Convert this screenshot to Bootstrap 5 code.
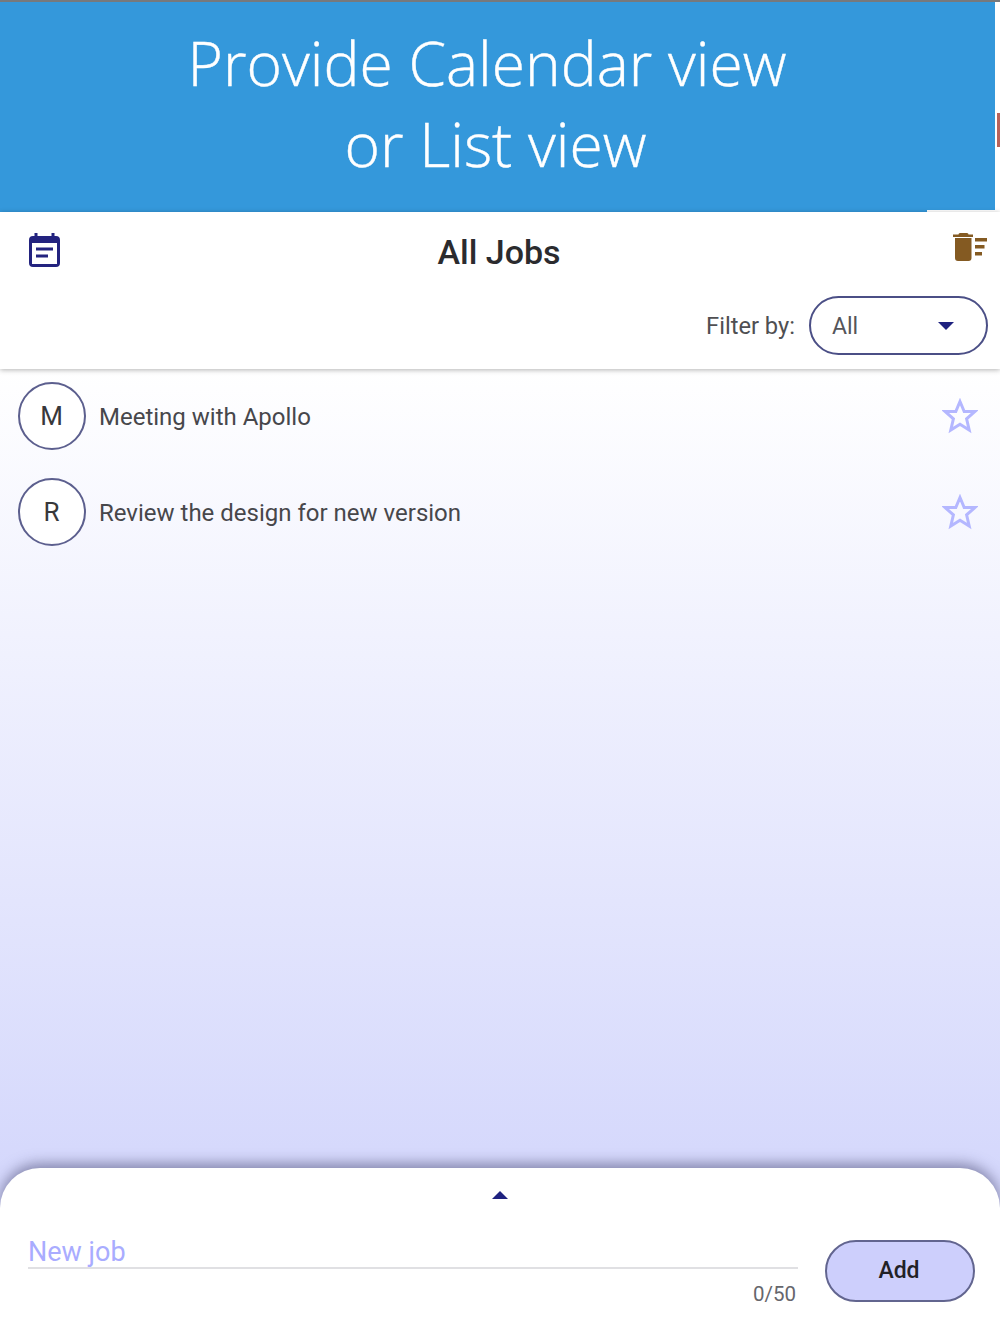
<!DOCTYPE html>
<html lang="en">
<head>
  <meta charset="UTF-8">
  <title>All Jobs</title>
  <link href="https://cdn.jsdelivr.net/npm/bootstrap@5.3.3/dist/css/bootstrap.min.css" rel="stylesheet">
  <style>
    html, body { height: 100%; }
    body {
      margin: 0;
      font-family: Roboto, "Liberation Sans", sans-serif;
      color: #3c3c40;
      background: #fff;
    }
    .app-shell { height: 1334px; overflow: hidden; }
    .promo-wrap { height: 212px; background: #fff; border-top: 2px solid #77797c; }
    .promo-banner {
      width: 995px;
      height: 208px;
      padding-top: 20px;
      background: #3498db;
      color: #fff;
      font-family: "Open Sans", sans-serif;
      font-weight: 300;
      font-size: 60.5px;
      line-height: 81px;
      text-align: center;
      -webkit-text-stroke: 0.4px #fff;
    }
    .promo-banner div:first-child { padding-right: 21px; }
    .promo-banner div:last-child { padding-right: 4px; }
    .promo-foot { width: 927px; height: 2px; background: #3498db; }
    .promo-sliver { width: 3px; height: 34px; margin: 111px 0 0 2px; background: #b9625a; }
    .top-panel {
      height: 157px;
      position: relative;
      z-index: 2;
      background: #fff;
      box-shadow: 0 1px 5px rgba(0,0,0,.3);
    }
    .title-row { height: 84px; padding: 21px 13px 0 29px; }
    .page-title { font-size: 34px; font-weight: 500; color: #2b2b2e; margin: -4px 0 0; line-height: 46px; padding-right: 15px; text-align: center; flex-grow: 1; }
    .filter-row { padding-right: 12px; gap: 14px; }
    .filter-label { font-size: 23.7px; color: #4f4f52; padding-top: 3px; }
    .filter-pill {
      width: 179px;
      height: 59px;
      border: 2px solid #4b4f86;
      border-radius: 30px;
      padding: 0 32px 0 21px;
      font-size: 23px;
      color: #55555a;
    }
    .filter-pill span:first-child { padding-top: 3px; }
    .caret-down { width: 0; height: 0; border-left: 8px solid transparent; border-right: 8px solid transparent; border-top: 8px solid #1f2280; }
    .job-area {
      height: 839px;
      background: linear-gradient(#fff 0, #d5d8fc 799px);
      padding: 13px 22px 0 18px;
    }
    .job-row { height: 68px; margin-bottom: 28px; }
    .job-avatar {
      width: 68px;
      height: 68px;
      flex: none;
      border: 2px solid #5c5f8e;
      border-radius: 50%;
      background: #fff;
      font-size: 26px;
      color: #38383b;
      padding-right: 1px;
    }
    .job-text { margin-left: 13px; padding-top: 2px; font-size: 24px; color: #47474b; }
    .bottom-sheet {
      height: 170px;
      margin-top: -40px;
      position: relative;
      background: #fff;
      border-radius: 40px 40px 0 0;
      box-shadow: 0 -4px 14px rgba(60,60,100,.55);
      padding: 23px 25px 0 28px;
    }
    .caret-wrap { padding-right: 3px; }
    .caret-up { width: 0; height: 0; margin: 0 auto; border-left: 8px solid transparent; border-right: 8px solid transparent; border-bottom: 8px solid #1f2280; }
    .entry-row { margin-top: 20px; gap: 27px; }
    .entry-col { width: 770px; }
    .entry-input {
      display: block;
      width: 100%;
      height: 50px;
      border: 0;
      border-bottom: 2px solid #e0e0e3;
      padding: 18px 0 0;
      outline: 0;
      font-family: Roboto, sans-serif;
      font-size: 27px;
      line-height: 32px;
      background: transparent;
    }
    .entry-input::placeholder { color: #a9acff; opacity: 1; }
    .entry-count { font-size: 20.5px; color: #66666c; text-align: right; padding-top: 12px; padding-right: 2px; line-height: 26px; }
    .add-btn {
      width: 150px;
      height: 62px;
      margin-top: 21px;
      border: 2px solid #62658f;
      border-radius: 31px;
      background: #cdcffc;
      color: #222226;
      font-size: 23px;
      font-weight: 500;
      padding-right: 14px;
    }
    .add-btn:hover { background: #cdcffc; border-color: #62658f; color: #222226; }
  </style>
</head>
<body>
<div class="app-shell">
  <div class="promo-wrap d-flex">
    <div>
      <div class="promo-banner">
        <div>Provide Calendar view</div>
        <div>or List view</div>
      </div>
      <div class="promo-foot"></div>
    </div>
    <div class="promo-sliver"></div>
  </div>

  <div class="top-panel">
    <div class="title-row d-flex align-items-start">
      <svg width="31" height="34" viewBox="0 0 31 34">
        <path fill="#23237f" d="M5.500 0h3v3h14V0h3v3H27a4 4 0 0 1 4 4v23a4 4 0 0 1-4 4H4a4 4 0 0 1-4-4V7a4 4 0 0 1 4-4h1.500z"/>
        <rect fill="#fff" x="3" y="10" width="25" height="21"/>
        <rect fill="#23237f" x="7" y="14.500" width="17" height="3"/>
        <rect fill="#23237f" x="7" y="21.500" width="12" height="3"/>
      </svg>
      <h1 class="page-title">All Jobs</h1>
      <svg width="34" height="28" viewBox="0 0 34 28">
        <path fill="#845a22" d="M7 0h7a1.500 1.500 0 0 1 1.500 1.500H20V4H0V1.500h5.500A1.500 1.500 0 0 1 7 0zM2 5h16.500v20a3 3 0 0 1-3 3H5a3 3 0 0 1-3-3z"/>
        <rect fill="#845a22" x="22" y="5" width="12" height="3.500"/>
        <rect fill="#845a22" x="22" y="12" width="9.500" height="3.500"/>
        <rect fill="#845a22" x="22" y="19" width="7" height="3.500"/>
      </svg>
    </div>
    <div class="filter-row d-flex justify-content-end align-items-center">
      <span class="filter-label">Filter by:</span>
      <div class="filter-pill d-flex justify-content-between align-items-center">
        <span>All</span>
        <span class="caret-down"></span>
      </div>
    </div>
  </div>

  <div class="job-area">
    <div class="job-row d-flex align-items-center">
      <div class="job-avatar d-flex justify-content-center align-items-center">M</div>
      <div class="job-text flex-grow-1">Meeting with Apollo</div>
      <svg width="36" height="36" viewBox="0 0 36 36"><path fill="none" stroke="#b4b7ff" stroke-width="3" d="M18 3.500l4.200 10h10.800l-8.400 7.400 2.600 11.100-9.200-5.800-9.200 5.800 2.600-11.100L3 13.500h10.800z"/></svg>
    </div>
    <div class="job-row d-flex align-items-center">
      <div class="job-avatar d-flex justify-content-center align-items-center">R</div>
      <div class="job-text flex-grow-1">Review the design for new version</div>
      <svg width="36" height="36" viewBox="0 0 36 36"><path fill="none" stroke="#b4b7ff" stroke-width="3" d="M18 3.500l4.200 10h10.800l-8.400 7.400 2.600 11.100-9.200-5.800-9.200 5.800 2.600-11.100L3 13.500h10.800z"/></svg>
    </div>
  </div>

  <div class="bottom-sheet">
    <div class="caret-wrap"><div class="caret-up"></div></div>
    <div class="entry-row d-flex align-items-start">
      <div class="entry-col">
        <input class="entry-input" type="text" placeholder="New job">
        <div class="entry-count">0/50</div>
      </div>
      <button class="btn add-btn" type="button">Add</button>
    </div>
  </div>
</div>
<script src="https://cdn.jsdelivr.net/npm/bootstrap@5.3.3/dist/js/bootstrap.bundle.min.js"></script>
</body>
</html>
